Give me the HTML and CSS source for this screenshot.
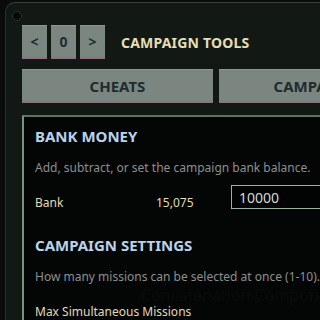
FILE: index.html
```html
<!DOCTYPE html>
<html lang="en">
<head>
    <meta charset="UTF-8">
    <meta name="viewport" content="width=device-width, initial-scale=1.0">
    <title>Campaign Tools</title>
    <link rel="stylesheet" href="styles.css">
</head>
<body>
    <div class="frame">
        <span class="screw"></span>

        <div class="toolbar">
            <button class="btn btn-small">&lt;</button>
            <button class="btn btn-small">0</button>
            <button class="btn btn-small">&gt;</button>
            <h1 class="title">CAMPAIGN TOOLS</h1>
        </div>

        <div class="tabs">
            <button class="btn tab">CHEATS</button>
            <button class="btn tab">CAMPAIGN</button>
        </div>

        <div class="panel">
            <div class="section">
                <h2>BANK MONEY</h2>
                <p class="hint">Add, subtract, or set the campaign bank balance.</p>
                <div class="row">
                    <span class="label">Bank</span>
                    <span class="value">15,075</span>
                    <input class="field" type="text" value="10000">
                </div>
            </div>

            <div class="section">
                <h2>CAMPAIGN SETTINGS</h2>
                <p class="hint">How many missions can be selected at once (1-10).</p>
                <span class="ghost">Concatenation Component</span>
                <div class="row">
                    <span class="label">Max Simultaneous Missions</span>
                </div>
            </div>
        </div>
    </div>
</body>
</html>
```

FILE: styles.css
```css
html, body {
    overflow: hidden;
}
body {
    margin: 0;
    padding: 0;
    background-color: #0a0c0b;
    font-family: "Noto Sans", sans-serif;
    width: 320px;
    height: 320px;
}
.frame {
    position: relative;
    margin: 2px 0 0 5px;
    height: 318px;
    overflow: hidden;
    background-color: #121915;
    border-top: 1px solid #3a413d;
    border-left: 1px solid #2a302c;
    border-radius: 10px 0 0 0;
}
.screw {
    position: absolute;
    left: 6px;
    top: 8px;
    width: 8px;
    height: 8px;
    border-radius: 50%;
    background-color: #070908;
    border: 1px solid #2c322f;
}
.toolbar {
    display: flex;
    align-items: center;
    gap: 4px;
    padding: 22px 0 0 16px;
}
.btn {
    flex-shrink: 0;
    background-color: #7b8680;
    border: none;
    border-top: 1px solid #8e9993;
    border-bottom: 2px solid #93707f;
    color: #1e2c32;
    font-family: "Noto Sans", sans-serif;
    font-weight: bold;
    padding: 0;
    cursor: pointer;
}
.btn-small {
    width: 25px;
    height: 34px;
    font-size: 14px;
}
.title {
    margin: 0 0 0 12px;
    font-size: 14px;
    font-weight: bold;
    color: #e6dfb2;
    letter-spacing: 0.2px;
    white-space: nowrap;
}
.tabs {
    display: flex;
    gap: 6px;
    padding: 10px 0 0 16px;
}
.tab {
    width: 191px;
    height: 34px;
    font-size: 15px;
}
.panel {
    margin: 12px 0 0 16px;
    height: 220px;
    background-color: #040606;
    border-top: 2px solid #5b7465;
    border-left: 2px solid #7a9282;
    padding: 9px 0 0 11px;
}
.section h2 {
    margin: 0;
    font-size: 15px;
    font-weight: bold;
    color: #b9d3ea;
}
.hint {
    margin: 13px 0 0 0;
    font-size: 12px;
    color: #8b908d;
    white-space: nowrap;
}
.row {
    display: flex;
    align-items: flex-start;
    margin-top: 9px;
    margin-bottom: 26px;
    height: 24px;
}
.label {
    flex-shrink: 0;
    width: 121px;
    padding-top: 9px;
    font-size: 12px;
    color: #e2dab4;
    white-space: nowrap;
}
.value {
    flex-shrink: 0;
    width: 75px;
    padding-top: 9px;
    font-size: 12px;
    color: #e2dab4;
}
.field {
    flex-shrink: 0;
    width: 100px;
    height: 20px;
    background-color: #020303;
    border: 1px solid #9db2a4;
    color: #d3ddd7;
    font-family: "Noto Sans", sans-serif;
    font-size: 14px;
    padding: 1px 7px;
}
.ghost {
    position: absolute;
    left: 135px;
    top: 281px;
    font-size: 16px;
    color: #080b0a;
    white-space: nowrap;
}
```
